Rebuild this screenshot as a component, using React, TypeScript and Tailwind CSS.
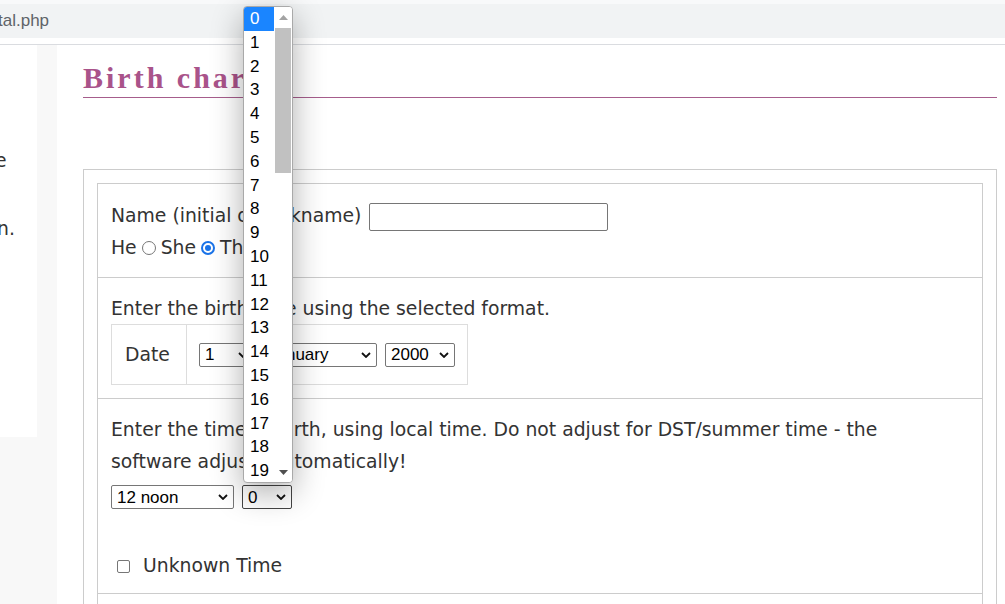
import React from 'react';

const minutes = Array.from({ length: 20 }, (_, i) => i);

function Chevron() {
  return (
    <svg width="10" height="6" viewBox="0 0 10 6" className="shrink-0">
      <path d="M1 1l4 4 4-4" fill="none" stroke="#111" strokeWidth="1.8" />
    </svg>
  );
}

function FakeSelect({ value, width, focused }: { value: string; width: string; focused?: boolean }) {
  return (
    <div
      className={`flex h-[24px] items-center justify-between rounded-[2px] border bg-white px-[5px] font-['Liberation_Sans',sans-serif] text-[17px] leading-none text-black ${width} ${
        focused ? 'border-[#444]' : 'border-[#767676]'
      }`}
    >
      <span>{value}</span>
      <Chevron />
    </div>
  );
}

function Radio({ checked }: { checked?: boolean }) {
  if (checked) {
    return (
      <span className="relative -top-[1px] mx-[5px] inline-flex h-[14px] w-[14px] items-center justify-center rounded-full border-2 border-[#1a73e8] align-middle">
        <span className="h-[6px] w-[6px] rounded-full bg-[#1a73e8]" />
      </span>
    );
  }
  return (
    <span className="relative -top-[1px] mx-[5px] inline-block h-[14px] w-[14px] rounded-full border border-[#767676] align-middle" />
  );
}

function MinuteList() {
  return (
    <div className="absolute left-[243px] top-[6px] flex h-[477px] w-[50px] overflow-hidden rounded-[4px] border border-[#a9a9a9] bg-white shadow-[0_10px_32px_rgba(0,0,0,0.32)]">
      <ul className="w-[30px] font-['Liberation_Sans',sans-serif] text-[17px] text-black">
        {minutes.map((m) => (
          <li
            key={m}
            className={`h-[23.8px] pl-[6px] leading-[23.8px] ${m === 0 ? 'bg-[#1a85ff] text-white' : ''}`}
          >
            {m}
          </li>
        ))}
      </ul>
      <div className="flex w-[18px] flex-col bg-white">
        <div className="flex h-[21px] items-center justify-center">
          <svg width="9" height="5" viewBox="0 0 9 5">
            <path d="M0 5L4.5 0 9 5z" fill="#a3a3a3" />
          </svg>
        </div>
        <div className="mx-[1px] h-[145px] bg-[#c1c1c1]" />
        <div className="flex-1" />
        <div className="flex h-[20px] items-center justify-center">
          <svg width="9" height="5" viewBox="0 0 9 5">
            <path d="M0 0L4.5 5 9 0z" fill="#505050" />
          </svg>
        </div>
      </div>
    </div>
  );
}

export default function App() {
  return (
    <div className="relative h-[604px] w-[1005px] overflow-hidden bg-white font-['DejaVu_Sans',sans-serif] text-[#333]">
      <div className="h-[4px] bg-[#f8f9fa]" />
      <div className="flex h-[34px] items-center bg-[#f1f3f4] font-['Liberation_Sans',sans-serif] text-[17px] text-[#5f6368]">
        <span className="-ml-[2px]">tal.php</span>
      </div>
      <div className="h-[7px] border-b border-[#dadce0]" />

      <div className="flex h-[559px] bg-[#f8f8f8]">
        <div className="h-[392px] w-[37px] shrink-0 overflow-hidden bg-white text-[18.8px] leading-[32px]">
          <p className="mt-[100px] -ml-[5px]">e</p>
          <p className="mt-[36px] -ml-[3px]">n.</p>
        </div>
        <div className="w-[20px] shrink-0" />

        <main className="flex-1 bg-white pl-[26px] pr-[8px]">
          <h1 className="mt-[16px] border-b border-[#a65d8c] pb-[3px] font-['Liberation_Serif',serif] text-[30px] font-bold leading-[33px] tracking-[3px] text-[#a9538a]">
            Birth chart
          </h1>

          <div className="mt-[71px] border border-[#cccccc] p-[13px]">
            <div className="border border-[#cccccc] text-[18.8px] leading-[32px]">
              <section className="px-[13px] pb-[13px] pt-[16px]">
                <div>
                  Name (initial or nickname){' '}
                  <span className="ml-[2px] inline-block h-[28px] w-[239px] rounded-[2px] border border-[#767676] align-middle" />
                </div>
                <div>
                  He
                  <Radio />
                  She
                  <Radio checked />
                  They
                  <Radio />
                </div>
              </section>

              <section className="border-t border-[#cccccc] px-[13px] pb-[13px] pt-[15px]">
                <p>Enter the birth date using the selected format.</p>
                <div className="-mt-[1px] inline-flex h-[61px] border border-[#dddddd]">
                  <div className="flex w-[75px] items-center border-r border-[#dddddd] pl-[13px]">Date</div>
                  <div className="flex items-center gap-[8px] px-[12px]">
                    <FakeSelect value="1" width="w-[55px]" />
                    <FakeSelect value="January" width="w-[115px]" />
                    <FakeSelect value="2000" width="w-[70px]" />
                  </div>
                </div>
              </section>

              <section className="border-t border-[#cccccc] px-[13px] pb-[11px] pt-[15px]">
                <p>
                  Enter the time of birth, using local time. Do not adjust for DST/summer time - the
                  <br />
                  software adjusts automatically!
                </p>
                <div className="mt-[7px] flex gap-[8px]">
                  <FakeSelect value="12 noon" width="w-[123px]" />
                  <FakeSelect value="0" width="w-[50px]" focused />
                </div>
                <label className="mt-[41px] flex items-center">
                  <span className="ml-[6px] mr-[13px] inline-block h-[13px] w-[13px] rounded-[2px] border border-[#767676]" />
                  Unknown Time
                </label>
              </section>

              <section className="h-[60px] border-t border-[#cccccc]" />
            </div>
          </div>
        </main>
      </div>

      <MinuteList />
    </div>
  );
}
